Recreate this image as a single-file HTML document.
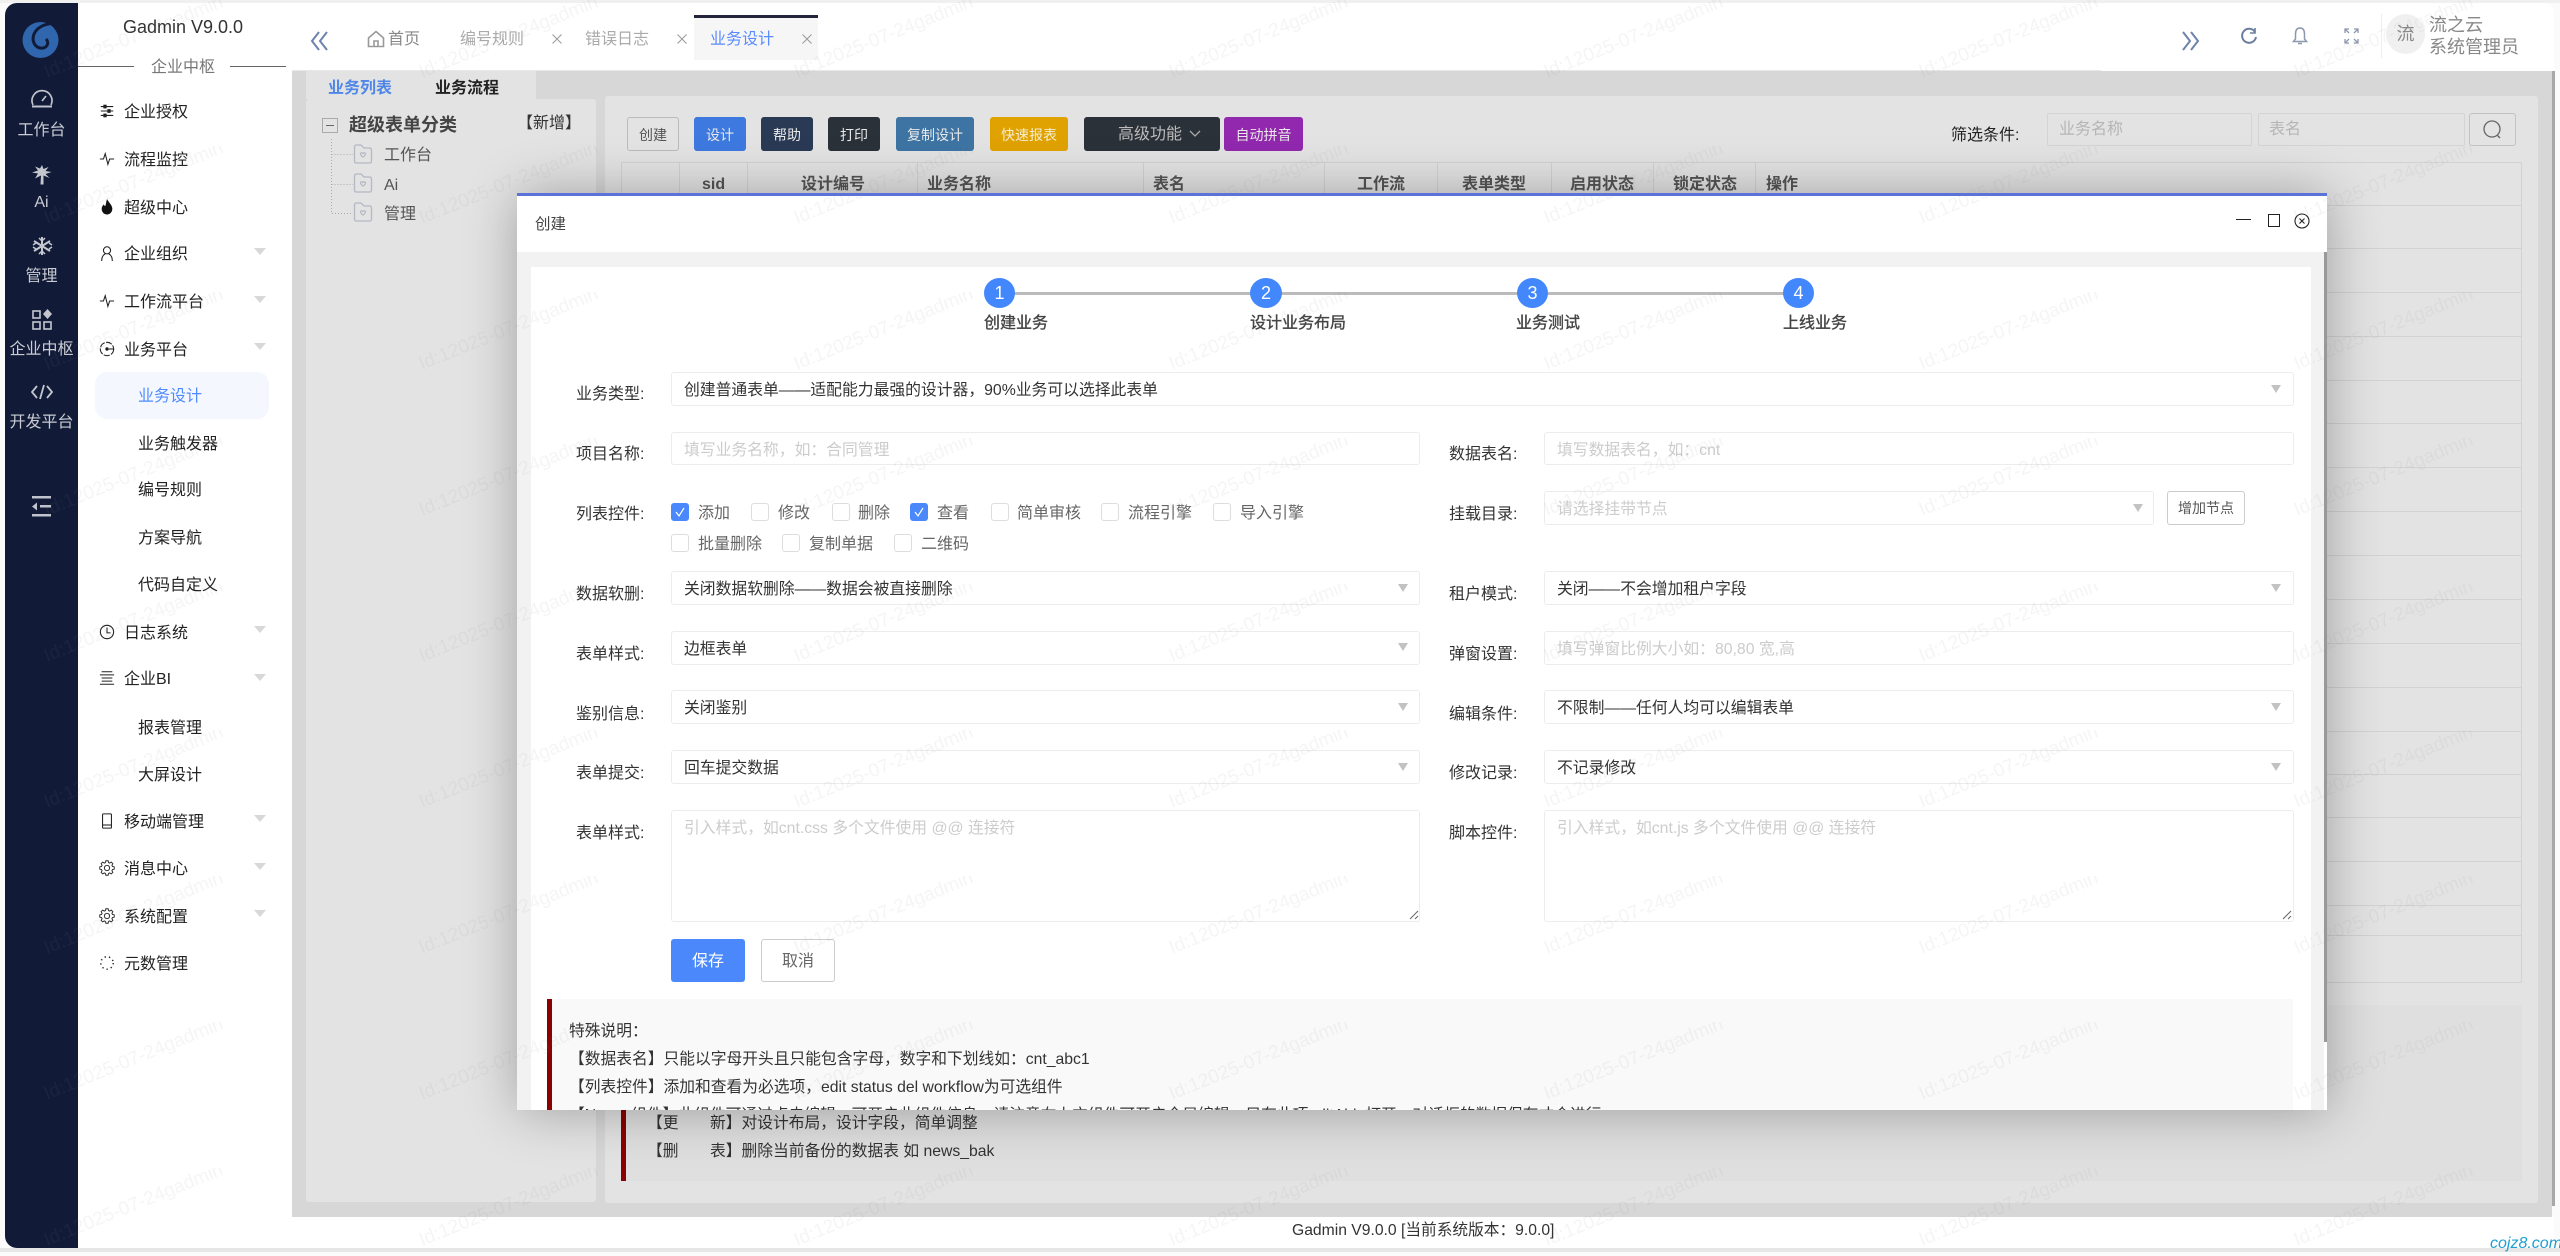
<!DOCTYPE html>
<html lang="zh-CN"><head><meta charset="utf-8"><title>Gadmin</title>
<style>
*{box-sizing:border-box}
html,body{margin:0;padding:0;width:2560px;height:1252px;overflow:hidden;background:#fbfbfb;font-family:"Liberation Sans","Noto Sans CJK SC",sans-serif;font-size:16px;color:#333}
.a{position:absolute}
.t{position:absolute;white-space:nowrap;line-height:24px;height:24px;padding-top:2px}
.side{color:#c9ccd3;text-align:center;left:5px;width:73px}
.mi{left:124px;color:#222}
.sub{left:138px;color:#222}
.ic{position:absolute;left:99px;width:16px;height:16px;fill:none;stroke:#222;stroke-width:1.200;overflow:visible;margin-top:1px}
.car{position:absolute;left:254px;width:0;height:0;border-left:6px solid transparent;border-right:6px solid transparent;border-top:7px solid #d8d8d8}
.btn{position:absolute;top:117px;height:34px;border-radius:3px;color:#e9e9e9;font-size:14px;line-height:36px;text-align:center}
.th{position:absolute;top:173px;white-space:nowrap;line-height:24px;font-weight:bold;color:#555;font-size:16px}
.inp{position:absolute;height:34px;background:#fff;border:1px solid #ececec;border-radius:3px;padding-left:12px;padding-top:3px;line-height:30px;color:#333;white-space:nowrap;overflow:hidden;font-size:15.800px}
.ph{color:#ccc}
.lab{position:absolute;white-space:nowrap;line-height:24px;color:#333;font-size:16px;padding-top:3px}
.tri{position:absolute;width:0;height:0;border-left:5.500px solid transparent;border-right:5.500px solid transparent;border-top:8px solid #c2c2c2}
.cb{position:absolute;width:18px;height:18px;border:1px solid #ddd;border-radius:3px;background:#fff}
.cb.on{background:#4a88fb;border-color:#4a88fb}
.cl{position:absolute;white-space:nowrap;line-height:24px;color:#666;font-size:16px;padding-top:2px}
.note{position:absolute;white-space:nowrap;line-height:24px;color:#333;font-size:15.750px;padding-top:3px}
.x{position:absolute;top:34px;width:10px;height:10px;fill:none;stroke:#999;stroke-width:1}
</style></head><body>

<!-- dark sidebar -->
<div class="a" style="left:5px;top:3px;width:73px;height:1245px;background:#111b38;border-radius:12px 0 0 12px"></div>
<svg class="a" style="left:0;top:0" width="78" height="530" fill="none">
<circle cx="40.500" cy="40" r="18" fill="#2f66ad"/>
<path d="M60 24C50 22 38 25 34 34C31 42 36 49 43 48C48 47 49 42 46 39" stroke="#111b38" stroke-width="3"/>
<path d="M60 24L50 22L58 34Z" fill="#111b38"/>
<g stroke="#c0c3cb" stroke-width="1.700"><path d="M33 105A10 10 0 1 1 51 105"/><path d="M32 106.500H52" stroke-width="2"/><path d="M42 101L46 96"/></g>
<g fill="#c4c7ce"><path d="M42 165l1.500 4 5-2-3 4 6 1-6 2 4 4-6-2.500 0 9h-3l.500-9-6 3 3-5-6-1 6-2-3-4 5 2z"/></g>
<g stroke="#c4c7ce" stroke-width="2"><path d="M42 237V255M34 241L50 251M50 241L34 251"/><path d="M39 238L42 241L45 238M39 254L42 251L45 254M33 245L36 243M49 243L52 245M33 247L36 249M49 249L52 247" stroke-width="1.500"/></g>
<g stroke="#c4c7ce" stroke-width="1.600"><rect x="33" y="311" width="7" height="7"/><rect x="33" y="322" width="7" height="7"/><rect x="44" y="322" width="7" height="7"/></g><path d="M47.500 309L52 314L47.500 319L43 314Z" fill="#c4c7ce"/>
<g stroke="#c4c7ce" stroke-width="1.800"><path d="M37 386L32 392L37 398M47 386L52 392L47 398M44 385L40 399"/></g>
<g fill="#c0c3cb"><rect x="32" y="496" width="19" height="2.500"/><rect x="40" y="505" width="11" height="2.500"/><rect x="32" y="514" width="19" height="2.500"/><path d="M32 506.500L37 502.500V510.500Z"/></g>
</svg>
<div class="t side" style="top:117px">工作台</div>
<div class="t side" style="top:189px">Ai</div>
<div class="t side" style="top:263px">管理</div>
<div class="t side" style="top:336px">企业中枢</div>
<div class="t side" style="top:409px">开发平台</div>

<!-- menu -->
<div class="a" style="left:78px;top:3px;width:214px;height:1245px;background:#fff"></div>
<div class="t" style="left:123px;top:13px;font-size:18px;color:#333">Gadmin V9.0.0</div>
<div class="a" style="left:78px;top:66px;width:56px;height:1px;background:#666"></div>
<div class="a" style="left:230px;top:66px;width:56px;height:1px;background:#666"></div>
<div class="t" style="left:151px;top:54px;color:#777">企业中枢</div>
<div class="a" style="left:95px;top:372px;width:174px;height:47px;border-radius:12px;background:#f5f7ff"></div>

<svg class="ic" style="top:102px" viewBox="0 0 18 18"><path d="M2 4H16M2 9H16M2 14H16" stroke-width="1.200"/><rect x="5.500" y="2.500" width="2.500" height="3" fill="#222"/><rect x="10" y="7.500" width="2.500" height="3" fill="#222"/><rect x="5.500" y="12.500" width="2.500" height="3" fill="#222"/></svg>
<svg class="ic" style="top:150px" viewBox="0 0 18 18"><path d="M1 9H5L7 3L10 15L12 9H17"/></svg>
<svg class="ic" style="top:198px" viewBox="0 0 18 18"><path d="M9 0C11 4 15 7 15 11C15 15 12 17.500 9 17.500C6 17.500 3 15 3 11C3 9 4 7.500 5.500 6C6 7.500 6.500 8 7 8C8 6 8 3 9 0Z" fill="#111" stroke="none"/></svg>
<svg class="ic" style="top:244px" viewBox="0 0 18 18"><circle cx="9" cy="6" r="4"/><path d="M3 18C3 13 5 11 7 10M15 18C15 13 13 11 11 10"/></svg>
<svg class="ic" style="top:292px" viewBox="0 0 18 18"><path d="M1 9H5L7 3L10 15L12 9H17"/></svg>
<svg class="ic" style="top:340px" viewBox="0 0 18 18"><circle cx="9" cy="9" r="7.500" stroke-dasharray="7 1.500"/><circle cx="9" cy="9" r="1.300" fill="#222"/><path d="M11 9H17"/></svg>
<svg class="ic" style="top:623px" viewBox="0 0 18 18"><circle cx="9" cy="9" r="7.500"/><path d="M9 4V10H13"/></svg>
<svg class="ic" style="top:669px" viewBox="0 0 18 18"><path d="M3 2H15M1 5.500H17M3 9H15M3 12.500H15M1 16H17"/></svg>
<svg class="ic" style="top:812px" viewBox="0 0 18 18"><rect x="4" y="1" width="10" height="16" rx="1"/><path d="M4 13.500H14"/></svg>
<svg class="ic" style="top:859px" viewBox="-1 0 20 21.200"><path d="M7.500 1h3l.5 2.400 1.600.7 2.100-1.300 2.100 2.100-1.300 2.100.7 1.600 2.400.5v3l-2.400.5-.7 1.600 1.300 2.100-2.100 2.100-2.100-1.300-1.600.7-.5 2.400h-3l-.5-2.400-1.600-.7-2.100 1.300-2.100-2.100 1.300-2.100-.7-1.600-2.400-.5v-3l2.400-.5.7-1.600-1.300-2.100 2.100-2.100 2.100 1.300 1.600-.7z"/><circle cx="9" cy="10.600" r="3.500"/></svg>
<svg class="ic" style="top:907px" viewBox="-1 0 20 21.200"><path d="M7.500 1h3l.5 2.400 1.600.7 2.100-1.300 2.100 2.100-1.300 2.100.7 1.600 2.400.5v3l-2.400.5-.7 1.600 1.300 2.100-2.100 2.100-2.100-1.300-1.600.7-.5 2.400h-3l-.5-2.400-1.600-.7-2.100 1.300-2.100-2.100 1.300-2.100-.7-1.600-2.400-.5v-3l2.400-.5.7-1.600-1.300-2.100 2.100-2.100 2.100 1.300 1.600-.7z"/><circle cx="9" cy="10.600" r="3.500"/></svg>
<svg class="ic" style="top:954px" viewBox="0 0 18 18"><circle cx="9" cy="9" r="7" stroke-dasharray="1.500 3.500" stroke-width="1.600"/></svg>

<div class="t mi" style="top:99px">企业授权</div>
<div class="t mi" style="top:147px">流程监控</div>
<div class="t mi" style="top:195px">超级中心</div>
<div class="t mi" style="top:241px">企业组织</div><div class="car" style="top:248px"></div>
<div class="t mi" style="top:289px">工作流平台</div><div class="car" style="top:296px"></div>
<div class="t mi" style="top:337px">业务平台</div><div class="car" style="top:343px"></div>
<div class="t sub" style="top:383px;color:#4f8bff">业务设计</div>
<div class="t sub" style="top:431px">业务触发器</div>
<div class="t sub" style="top:477px">编号规则</div>
<div class="t sub" style="top:525px">方案导航</div>
<div class="t sub" style="top:572px">代码自定义</div>
<div class="t mi" style="top:620px">日志系统</div><div class="car" style="top:626px"></div>
<div class="t mi" style="top:666px">企业BI</div><div class="car" style="top:674px"></div>
<div class="t sub" style="top:715px">报表管理</div>
<div class="t sub" style="top:762px">大屏设计</div>
<div class="t mi" style="top:809px">移动端管理</div><div class="car" style="top:815px"></div>
<div class="t mi" style="top:856px">消息中心</div><div class="car" style="top:863px"></div>
<div class="t mi" style="top:904px">系统配置</div><div class="car" style="top:910px"></div>
<div class="t mi" style="top:951px">元数管理</div>

<!-- top bar -->
<div class="a" style="left:292px;top:3px;width:2262px;height:68px;background:#fff;border-radius:0 10px 0 0"></div>
<div class="a" style="left:292px;top:70px;width:1809px;height:1px;background:#e8e8e8"></div>
<svg class="a" style="left:310px;top:30px" width="20" height="22" fill="none" stroke="#6d83ac" stroke-width="2"><path d="M9 2L2 11L9 20M17 2L10 11L17 20"/></svg>
<svg class="a" style="left:367px;top:30px" width="18" height="18" fill="none" stroke="#999" stroke-width="1.600"><path d="M1.500 8L9 1.500L16.500 8V16.500H1.500Z"/><path d="M7 16.500V11H11V16.500"/></svg>
<div class="t" style="left:388px;top:26px;color:#888">首页</div>
<div class="t" style="left:460px;top:26px;color:#aaa">编号规则</div>
<svg class="x" style="left:552px"><path d="M.5 .5L9.500 9.500M9.500 .5L.5 9.500"/></svg>
<div class="t" style="left:585px;top:26px;color:#aaa">错误日志</div>
<svg class="x" style="left:677px"><path d="M.5 .5L9.500 9.500M9.500 .5L.5 9.500"/></svg>
<div class="a" style="left:694px;top:15px;width:124px;height:45px;background:#f6f6f6;border-top:3px solid #23263a"></div>
<div class="t" style="left:710px;top:26px;color:#5a8cff">业务设计</div>
<svg class="x" style="left:802px"><path d="M.5 .5L9.500 9.500M9.500 .5L.5 9.500"/></svg>
<svg class="a" style="left:2180px;top:30px" width="20" height="22" fill="none" stroke="#6d83ac" stroke-width="2"><path d="M3 2L10 11L3 20M11 2L18 11L11 20"/></svg>
<svg class="a" style="left:2240px;top:27px" width="18" height="18" fill="none" stroke="#6b7d9c" stroke-width="2"><path d="M15 5A7 7 0 1 0 16 10"/><path d="M15 1V6H10" stroke-width="1.600"/></svg>
<svg class="a" style="left:2292px;top:27px" width="16" height="18" fill="none" stroke="#8b98ad" stroke-width="1.500"><path d="M8 1C4.500 1 3.500 4 3.500 7V12L1.500 14.500H14.500L12.500 12V7C12.500 4 11.500 1 8 1Z"/><path d="M6 16.500H10"/></svg>
<svg class="a" style="left:2344px;top:28px" width="15" height="16" fill="none" stroke="#8b98ad" stroke-width="1.300"><path d="M1 5V1H5M10 1H14V5M14 11V15H10M5 15H1V11M1 1L5 5M14 1L10 5M14 15L10 11M1 15L5 11"/></svg>
<div class="a" style="left:2381px;top:14px;width:1px;height:44px;background:#eee"></div>
<div class="a" style="left:2386px;top:14px;width:39px;height:40px;border-radius:50%;background:#f0f0f0;text-align:center;line-height:40px;color:#888;font-size:18px">流</div>
<div class="t" style="left:2429px;top:11px;color:#888;font-size:18px">流之云</div>
<div class="t" style="left:2429px;top:33px;color:#888;font-size:18px">系统管理员</div>

<!-- main -->
<div class="a" style="left:292px;top:71px;width:2260px;height:1146px;overflow:hidden;background:#d7d7d7">
<div class="a" style="left:-292px;top:-71px;width:2560px;height:1252px">
  <div class="a" style="left:306px;top:71px;width:230px;height:28px;background:#e3e3e3"></div>
  <div class="t" style="left:328px;top:75px;font-weight:bold;color:#4f86e8">业务列表</div>
  <div class="t" style="left:435px;top:75px;font-weight:bold;color:#222">业务流程</div>
  <div class="a" style="left:306px;top:99px;width:290px;height:1103px;background:#e3e3e3;border-radius:3px"></div>
  <div class="a" style="left:322px;top:118px;width:16px;height:15px;border:1px solid #aaa;background:#e3e3e3"></div>
  <div class="a" style="left:326px;top:125px;width:8px;height:1px;background:#666"></div>
  <div class="t" style="left:349px;top:111px;font-size:18px;font-weight:bold;color:#444">超级表单分类</div>
  <div class="t" style="left:517px;top:110px;font-size:16px;color:#333">【新增】</div>
  <svg class="a" style="left:325px;top:135px" width="60" height="95" fill="none" stroke="#aaa">
    <path d="M6.500 4V78.500H28M6.500 19.500H28M6.500 49.500H28" stroke-dasharray="1 2"/>
    <g stroke="#b4b9c4" stroke-width="1.300"><path d="M29.500 12Q29.500 10 31.500 10H36L39 13H44.500Q46.500 13 46.500 15V26Q46.500 28 44.500 28H31.500Q29.500 28 29.500 26Z"/><path d="M35.500 18.500C36.500 17 38 18 38 19C38 18 39.500 17 40.500 18.500C41 20 38 22 38 22.500C38 22 35 20 35.500 18.500Z"/><path d="M29.500 41Q29.500 39 31.500 39H36L39 42H44.500Q46.500 42 46.500 44V55Q46.500 57 44.500 57H31.500Q29.500 57 29.500 55Z"/><path d="M35.500 47.500C36.500 46 38 47 38 48C38 47 39.500 46 40.500 47.500C41 49 38 51 38 51.500C38 51 35 49 35.500 47.500Z"/><path d="M29.500 70Q29.500 68 31.500 68H36L39 71H44.500Q46.500 71 46.500 73V84Q46.500 86 44.500 86H31.500Q29.500 86 29.500 84Z"/><path d="M35.500 76.500C36.500 75 38 76 38 77C38 76 39.500 75 40.500 76.500C41 78 38 80 38 80.500C38 80 35 78 35.500 76.500Z"/></g>
  </svg>
  <div class="t" style="left:384px;top:142px;color:#555">工作台</div>
  <div class="t" style="left:384px;top:172px;color:#555">Ai</div>
  <div class="t" style="left:384px;top:201px;color:#555">管理</div>

  <div class="a" style="left:605px;top:96px;width:1933px;height:1107px;background:#e3e3e3;border-radius:3px"></div>
  <div class="btn" style="left:627px;width:52px;background:#e3e3e3;border:1px solid #bbb;color:#555;line-height:34px">创建</div>
  <div class="btn" style="left:694px;width:52px;background:#3d79df">设计</div>
  <div class="btn" style="left:761px;width:52px;background:#2a3a55">帮助</div>
  <div class="btn" style="left:828px;width:52px;background:#2b3138">打印</div>
  <div class="btn" style="left:896px;width:78px;background:#3d74a3">复制设计</div>
  <div class="btn" style="left:990px;width:78px;background:#e0a200;color:#f5ecd0">快速报表</div>
  <div class="btn" style="left:1084px;width:136px;background:#2b3138;color:#bbb;font-size:16px"><span style="position:absolute;left:34px">高级功能</span><svg class="a" style="left:105px;top:13px" width="12" height="8" fill="none" stroke="#aaa" stroke-width="1.300"><path d="M1 1L6 6L11 1"/></svg></div>
  <div class="btn" style="left:1224px;width:79px;background:#9128ae">自动拼音</div>

  <div class="t" style="left:1951px;top:122px;color:#222">筛选条件:</div>
  <div class="a" style="left:2047px;top:113px;width:205px;height:33px;border:1px solid #d4d4d4;border-radius:2px;color:#b5b5b5;line-height:31px;padding-left:11px">业务名称</div>
  <div class="a" style="left:2258px;top:113px;width:207px;height:33px;border:1px solid #d4d4d4;border-radius:2px;color:#b5b5b5;line-height:31px;padding-left:10px">表名</div>
  <div class="a" style="left:2469px;top:113px;width:47px;height:33px;border:1px solid #c2c2c2;border-radius:3px"></div>
  <svg class="a" style="left:2483px;top:120px" width="20" height="20" fill="none" stroke="#666" stroke-width="1.300"><circle cx="9" cy="9" r="8"/><path d="M14 15L17 18"/></svg>

  <svg class="a" style="left:0;top:0" width="2560" height="1252" fill="none" stroke="#d2d2d2">
    <path d="M621.500 162.500H2521.500V982.500M621.500 162.500V200M679.500 162.500V200M747.500 162.500V200M917.500 162.500V200M1143.500 162.500V200M1324.500 162.500V200M1437.500 162.500V200M1551.500 162.500V200M1653.500 162.500V200M1755.500 162.500V200"/>
    <path d="M2300 205.500H2521M2300 248.500H2521M2300 292.500H2521M2300 336.500H2521M2300 380.500H2521M2300 423.500H2521M2300 467.500H2521M2300 511.500H2521M2300 555.500H2521M2300 599.500H2521M2300 643.500H2521M2300 687.500H2521M2300 731.500H2521M2300 774.500H2521M2300 817.500H2521M2300 861.500H2521M2300 905.500H2521M2300 935.500H2521M2300 982.500H2521"/>
  </svg>
  <div class="th" style="left:702px">sid</div>
  <div class="th" style="left:801px">设计编号</div>
  <div class="th" style="left:927px">业务名称</div>
  <div class="th" style="left:1153px">表名</div>
  <div class="th" style="left:1357px">工作流</div>
  <div class="th" style="left:1462px">表单类型</div>
  <div class="th" style="left:1570px">启用状态</div>
  <div class="th" style="left:1673px">锁定状态</div>
  <div class="th" style="left:1766px">操作</div>

  <div class="a" style="left:621px;top:1005px;width:1901px;height:176px;background:#dfdfdf"></div>
  <div class="a" style="left:621px;top:1005px;width:5px;height:176px;background:#8b0000"></div>
  <div class="note" style="left:647px;top:1109px">【更　　新】对设计布局，设计字段，简单调整</div>
  <div class="note" style="left:647px;top:1137px">【删　　表】删除当前备份的数据表 如 news_bak</div>

  <!-- dialog -->
  <div class="a" style="left:517px;top:193px;width:1810px;height:917px;background:#fff;border-top:3px solid #5b73d8;box-shadow:1px 1px 50px rgba(0,0,0,.3);overflow:hidden">
   <div class="a" style="left:-517px;top:-196px;width:2560px;height:1252px">
    <div class="t" style="left:535px;top:211px;font-size:15.500px;color:#444">创建</div>
    <div class="a" style="left:2236px;top:219px;width:15px;height:1px;background:#222"></div>
    <div class="a" style="left:2268px;top:214px;width:12px;height:13px;border:1px solid #222"></div>
    <svg class="a" style="left:2294px;top:213px" width="16" height="16" fill="none" stroke="#222" stroke-width="1.100"><circle cx="8" cy="8" r="7"/><path d="M5.500 5.500L10.500 10.500M10.500 5.500L5.500 10.500"/></svg>

    <div class="a" style="left:517px;top:252px;width:1810px;height:860px;background:#f2f2f2"></div>
    <div class="a" style="left:2324px;top:252px;width:3px;height:790px;background:#999"></div>
    <div class="a" style="left:2324px;top:1042px;width:3px;height:70px;background:#fff"></div>
    <div class="a" style="left:531px;top:267px;width:1780px;height:850px;background:#fff"></div>

    <div class="a" style="left:1000px;top:292px;width:799px;height:3px;background:#bbb"></div>
    <div class="a" style="left:984px;top:278px;width:31px;height:30px;border-radius:50%;background:#4287fb;color:#fff;text-align:center;line-height:30px;font-size:18px">1</div>
    <div class="a" style="left:1250px;top:278px;width:32px;height:30px;border-radius:50%;background:#4287fb;color:#fff;text-align:center;line-height:30px;font-size:18px">2</div>
    <div class="a" style="left:1517px;top:278px;width:31px;height:30px;border-radius:50%;background:#4287fb;color:#fff;text-align:center;line-height:30px;font-size:18px">3</div>
    <div class="a" style="left:1783px;top:278px;width:31px;height:30px;border-radius:50%;background:#4287fb;color:#fff;text-align:center;line-height:30px;font-size:18px">4</div>
    <div class="t" style="left:984px;top:310px;color:#444;-webkit-text-stroke:.35px #444">创建业务</div>
    <div class="t" style="left:1250px;top:310px;color:#444;-webkit-text-stroke:.35px #444">设计业务布局</div>
    <div class="t" style="left:1516px;top:310px;color:#444;-webkit-text-stroke:.35px #444">业务测试</div>
    <div class="t" style="left:1783px;top:310px;color:#444;-webkit-text-stroke:.35px #444">上线业务</div>

    <div class="lab" style="left:576px;top:380px">业务类型:</div>
    <div class="inp" style="left:671px;top:372px;width:1623px">创建普通表单——适配能力最强的设计器，90%业务可以选择此表单</div>
    <div class="tri" style="left:2271px;top:385px"></div>

    <div class="lab" style="left:576px;top:440px">项目名称:</div>
    <div class="inp ph" style="left:671px;top:432px;width:749px;height:33px">填写业务名称，如：合同管理</div>
    <div class="lab" style="left:1449px;top:440px">数据表名:</div>
    <div class="inp ph" style="left:1544px;top:432px;width:750px;height:33px">填写数据表名，如：cnt</div>

    <div class="lab" style="left:576px;top:500px">列表控件:</div>
    <div class="cb on" style="left:671px;top:503px"></div><div class="cl" style="left:698px;top:500px">添加</div>
    <div class="cb" style="left:751px;top:503px"></div><div class="cl" style="left:778px;top:500px">修改</div>
    <div class="cb" style="left:832px;top:503px"></div><div class="cl" style="left:858px;top:500px">删除</div>
    <div class="cb on" style="left:910px;top:503px"></div><div class="cl" style="left:937px;top:500px">查看</div>
    <div class="cb" style="left:991px;top:503px"></div><div class="cl" style="left:1017px;top:500px">简单审核</div>
    <div class="cb" style="left:1101px;top:503px"></div><div class="cl" style="left:1128px;top:500px">流程引擎</div>
    <div class="cb" style="left:1213px;top:503px"></div><div class="cl" style="left:1240px;top:500px">导入引擎</div>
    <svg class="a" style="left:671px;top:503px" width="260" height="18" fill="none" stroke="#fff" stroke-width="1.200"><path d="M5 9L8 13L13 5M244 9L247 13L252 5"/></svg>
    <div class="cb" style="left:671px;top:534px"></div><div class="cl" style="left:698px;top:531px">批量删除</div>
    <div class="cb" style="left:782px;top:534px"></div><div class="cl" style="left:809px;top:531px">复制单据</div>
    <div class="cb" style="left:894px;top:534px"></div><div class="cl" style="left:921px;top:531px">二维码</div>

    <div class="lab" style="left:1449px;top:500px">挂载目录:</div>
    <div class="inp ph" style="left:1544px;top:491px;width:610px">请选择挂带节点</div>
    <div class="tri" style="left:2133px;top:504px"></div>
    <div class="a" style="left:2167px;top:491px;width:78px;height:34px;border:1px solid #ccc;border-radius:3px;text-align:center;line-height:33px;font-size:14px;color:#555">增加节点</div>

    <div class="lab" style="left:576px;top:580px">数据软删:</div>
    <div class="inp" style="left:671px;top:571px;width:749px">关闭数据软删除——数据会被直接删除</div>
    <div class="tri" style="left:1398px;top:584px"></div>
    <div class="lab" style="left:1449px;top:580px">租户模式:</div>
    <div class="inp" style="left:1544px;top:571px;width:750px">关闭——不会增加租户字段</div>
    <div class="tri" style="left:2271px;top:584px"></div>

    <div class="lab" style="left:576px;top:640px">表单样式:</div>
    <div class="inp" style="left:671px;top:631px;width:749px">边框表单</div>
    <div class="tri" style="left:1398px;top:643px"></div>
    <div class="lab" style="left:1449px;top:640px">弹窗设置:</div>
    <div class="inp ph" style="left:1544px;top:631px;width:750px">填写弹窗比例大小如：80,80 宽,高</div>

    <div class="lab" style="left:576px;top:700px">鉴别信息:</div>
    <div class="inp" style="left:671px;top:690px;width:749px">关闭鉴别</div>
    <div class="tri" style="left:1398px;top:703px"></div>
    <div class="lab" style="left:1449px;top:700px">编辑条件:</div>
    <div class="inp" style="left:1544px;top:690px;width:750px">不限制——任何人均可以编辑表单</div>
    <div class="tri" style="left:2271px;top:703px"></div>

    <div class="lab" style="left:576px;top:759px">表单提交:</div>
    <div class="inp" style="left:671px;top:750px;width:749px">回车提交数据</div>
    <div class="tri" style="left:1398px;top:763px"></div>
    <div class="lab" style="left:1449px;top:759px">修改记录:</div>
    <div class="inp" style="left:1544px;top:750px;width:750px">不记录修改</div>
    <div class="tri" style="left:2271px;top:763px"></div>

    <div class="lab" style="left:576px;top:819px">表单样式:</div>
    <div class="inp ph" style="left:671px;top:810px;width:749px;height:112px;line-height:30px">引入样式，如cnt.css 多个文件使用 @@ 连接符</div>
    <div class="lab" style="left:1449px;top:819px">脚本控件:</div>
    <div class="inp ph" style="left:1544px;top:810px;width:750px;height:112px;line-height:30px">引入样式，如cnt.js 多个文件使用 @@ 连接符</div>
    <svg class="a" style="left:1408px;top:908px" width="12" height="12" fill="none" stroke="#666"><path d="M2 11L10 3M7 11L10 8"/></svg>
    <svg class="a" style="left:2281px;top:908px" width="12" height="12" fill="none" stroke="#666"><path d="M2 11L10 3M7 11L10 8"/></svg>

    <div class="a" style="left:671px;top:939px;width:74px;height:43px;background:#4a88fb;border-radius:3px;color:#fff;text-align:center;line-height:45px">保存</div>
    <div class="a" style="left:761px;top:939px;width:74px;height:43px;border:1px solid #ccc;border-radius:3px;color:#666;text-align:center;line-height:43px">取消</div>

    <div class="a" style="left:547px;top:999px;width:1746px;height:120px;background:#f9f9f9;border-left:5px solid #8b0000"></div>
    <div class="note" style="left:569px;top:1017px">特殊说明：</div>
    <div class="note" style="left:569px;top:1045px">【数据表名】只能以字母开头且只能包含字母，数字和下划线如：cnt_abc1</div>
    <div class="note" style="left:569px;top:1073px">【列表控件】添加和查看为必选项，edit status del workflow为可选组件</div>
    <div class="note" style="left:569px;top:1101px">【Name 组件】此组件可通过点击编辑，可开启此组件信息，请注意右上方组件可开启全局编辑，只有此项editAble打开，对话框的数据保存才会进行</div>
   </div>
  </div>
</div>
</div>
<div class="a" style="left:2552px;top:71px;width:3px;height:1135px;background:#a8a8a8"></div>

<!-- footer -->
<div class="a" style="left:292px;top:1217px;width:2262px;height:31px;background:#fff"></div>
<div class="t" style="left:1292px;top:1217px;color:#333;font-size:15.700px">Gadmin V9.0.0 [当前系统版本：9.0.0]</div>
<div class="a" style="left:0;top:1248px;width:2560px;height:4px;background:#e6e6e6"></div>
<div class="a" style="left:0;top:0;width:2560px;height:3px;background:#f0f0f0"></div>
<div class="t" style="left:2490px;top:1230px;color:#1f9fcf;font-style:italic;font-size:16px">cojz8.com</div>

<!-- watermark -->
<svg class="a" style="left:0;top:0;pointer-events:none" width="2560" height="1252">
<defs><pattern id="w" patternUnits="userSpaceOnUse" width="375" height="146"><text x="47" y="78" transform="rotate(-22 47 78)" font-family="Liberation Sans" font-size="19" fill="rgba(128,128,128,.08)">Id:12025-07-24gadmin</text></pattern></defs>
<rect width="2560" height="1252" fill="url(#w)"/>
</svg>
</body></html>
